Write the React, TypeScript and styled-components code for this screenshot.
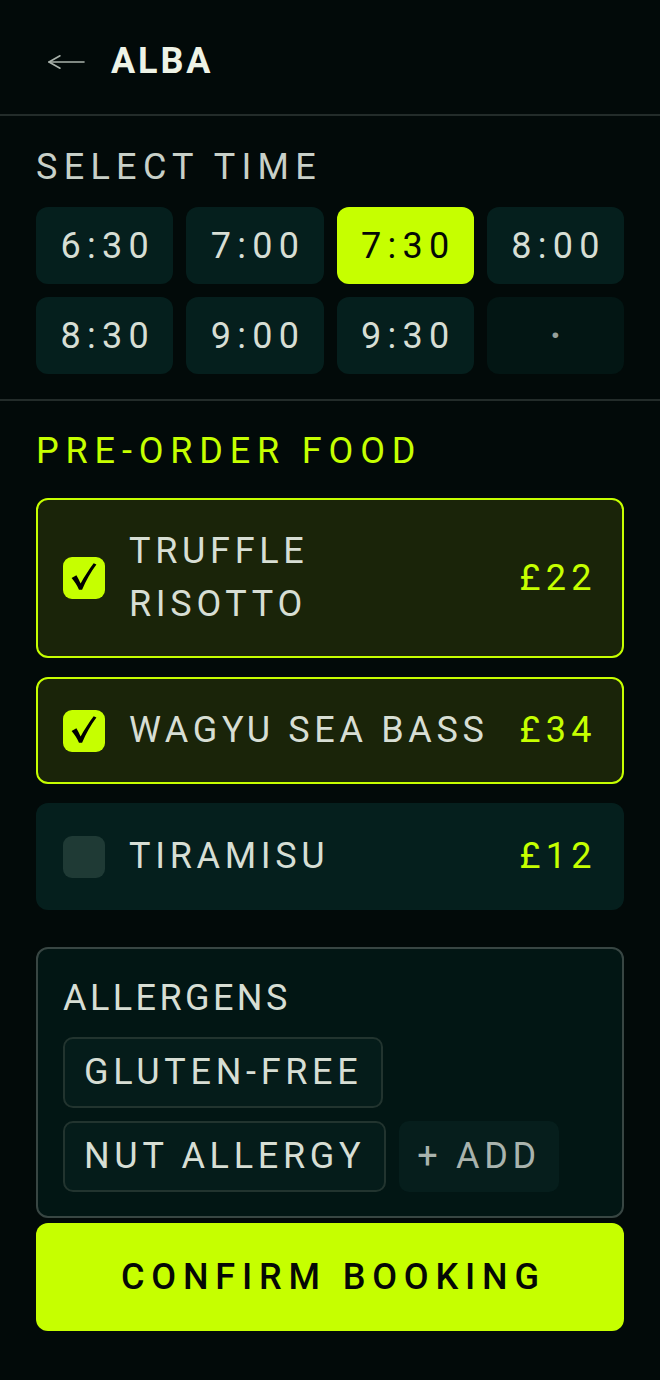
import React from "react";
import styled, { createGlobalStyle } from "styled-components";

const GlobalStyle = createGlobalStyle`
  html, body { margin: 0; padding: 0; background: #020a09; }
  body { font-family: Roboto, "Noto Sans", sans-serif; color: #d7ded4; }
  * { box-sizing: border-box; }
`;

const LIME = "#c6ff00";

const Page = styled.div`
  width: 660px;
  min-height: 1380px;
  background: #020a09;
  display: flex;
  flex-direction: column;
`;

const Header = styled.header`
  height: 116px;
  padding: 10px 36px 0 48px;
  display: flex;
  align-items: center;
  gap: 26px;
  border-bottom: 2px solid #232c2a;
`;

const BackButton = styled.button`
  background: none;
  border: none;
  padding: 0;
  display: flex;
  align-items: center;
  color: #a9b2ab;
  cursor: pointer;
`;

const Title = styled.h1`
  margin: 0;
  font-size: 36px;
  font-weight: 700;
  letter-spacing: 0.08em;
  color: #eef3e6;
  line-height: 1.2;
`;

const Section = styled.section<{ $divider?: boolean }>`
  padding: ${(p) => (p.$divider ? "30px 36px 25px" : "29px 36px 0")};
  border-bottom: ${(p) => (p.$divider ? "2px solid #232c2a" : "none")};
  display: flex;
  flex-direction: column;
`;

const SectionLabel = styled.h2<{ $accent?: boolean; $gap: number }>`
  margin: 0 0 ${(p) => p.$gap}px;
  font-size: 36px;
  font-weight: 400;
  line-height: 1.2;
  letter-spacing: ${(p) => (p.$accent ? "0.19em" : "0.175em")};
  color: ${(p) => (p.$accent ? LIME : "#c8d0c8")};
`;

const TimeGrid = styled.div`
  display: grid;
  grid-template-columns: repeat(4, 1fr);
  gap: 13px;
`;

const Slot = styled.button<{ $selected?: boolean; $empty?: boolean }>`
  height: 77px;
  border: none;
  border-radius: 12px;
  display: flex;
  align-items: center;
  justify-content: center;
  font-family: Roboto, sans-serif;
  font-size: 36px;
  font-weight: ${(p) => (p.$empty ? 700 : 400)};
  letter-spacing: 0.175em;
  padding: 0 0 0 0.175em;
  background: ${(p) => (p.$selected ? LIME : p.$empty ? "#031614" : "#051f1d")};
  color: ${(p) => (p.$selected ? "#050805" : p.$empty ? "#96a09b" : "#d7ded4")};
`;

const FoodList = styled.div`
  display: flex;
  flex-direction: column;
  gap: 19px;
`;

const FoodCard = styled.label<{ $checked?: boolean }>`
  display: flex;
  align-items: center;
  gap: 24px;
  padding: 25px 25px;
  border-radius: 12px;
  border: 2px solid ${(p) => (p.$checked ? LIME : "transparent")};
  background: ${(p) => (p.$checked ? "#1a2409" : "#051f1d")};
`;

const CheckBox = styled.span<{ $checked?: boolean }>`
  flex: 0 0 42px;
  height: 42px;
  border-radius: 9px;
  background: ${(p) => (p.$checked ? LIME : "#1f3a35")};
  color: #000;
  display: flex;
  align-items: center;
  justify-content: center;
`;

const FoodName = styled.span`
  flex: 1;
  font-size: 36px;
  line-height: 53px;
  letter-spacing: 0.13em;
  color: #d7ded4;
`;

const Price = styled.span`
  font-size: 36px;
  line-height: 53px;
  font-weight: 400;
  letter-spacing: 0.15em;
  color: ${LIME};
`;

const AllergenBox = styled.div`
  margin-top: 37px;
  border: 2px solid #384643;
  border-radius: 12px;
  background: #021614;
  padding: 28px 25px 24px;
`;

const AllergenLabel = styled.div`
  font-size: 36px;
  line-height: 1.2;
  letter-spacing: 0.095em;
  color: #d7ded4;
  margin-bottom: 16px;
`;

const ChipRow = styled.div`
  display: flex;
  flex-wrap: wrap;
  gap: 13px;
`;

const Chip = styled.span<{ $add?: boolean }>`
  display: inline-flex;
  align-items: center;
  padding: ${(p) => (p.$add ? "12px 16px" : "12px 19px")};
  border-radius: 10px;
  border: 2px solid ${(p) => (p.$add ? "transparent" : "#22342f")};
  background: ${(p) => (p.$add ? "#061e1c" : "#051c1a")};
  font-size: 36px;
  line-height: 1.2;
  letter-spacing: 0.13em;
  color: ${(p) => (p.$add ? "#a9b3ad" : "#d7ded4")};
`;

const ConfirmButton = styled.button`
  margin-top: 5px;
  height: 108px;
  width: 100%;
  border: none;
  border-radius: 12px;
  background: ${LIME};
  color: #050805;
  font-family: Roboto, sans-serif;
  font-size: 36px;
  font-weight: 500;
  letter-spacing: 0.19em;
  padding: 0 0 0 0.19em;
  cursor: pointer;
`;

const BackArrow = () => (
  <svg width="37" height="16" viewBox="0 0 37 16" fill="none" stroke="currentColor" strokeWidth="1.6" strokeLinecap="round" strokeLinejoin="round">
    <path d="M1 8h35" />
    <path d="M12 1.8 1 8l11 6.2" />
  </svg>
);

const CheckMark = () => (
  <svg width="42" height="42" viewBox="0 0 42 42" fill="currentColor">
    <path d="M8.6 21 13.4 18.3c1.5 2.6 3 5.3 4.2 8.2C21.4 19.6 26 12.6 30.7 6.3l2.7 1.1C27.9 15 22.9 23.4 19.1 32.7h-3.1C14.1 28.5 11.6 24.5 8.6 21Z" />
  </svg>
);

const times = ["6:30", "7:00", "7:30", "8:00", "8:30", "9:00", "9:30"];

const foods = [
  { name: "TRUFFLE RISOTTO", price: "£22", checked: true, wrap: true },
  { name: "WAGYU SEA BASS", price: "£34", checked: true },
  { name: "TIRAMISU", price: "£12", checked: false },
];

export default function App() {
  return (
    <>
      <GlobalStyle />
      <Page>
        <Header>
          <BackButton aria-label="Back">
            <BackArrow />
          </BackButton>
          <Title>ALBA</Title>
        </Header>

        <Section $divider>
          <SectionLabel $gap={18}>SELECT TIME</SectionLabel>
          <TimeGrid>
            {times.map((t) => (
              <Slot key={t} $selected={t === "7:30"}>
                {t}
              </Slot>
            ))}
            <Slot $empty>·</Slot>
          </TimeGrid>
        </Section>

        <Section>
          <SectionLabel $accent $gap={25}>PRE-ORDER FOOD</SectionLabel>
          <FoodList>
            {foods.map((f) => (
              <FoodCard key={f.name} $checked={f.checked}>
                <CheckBox $checked={f.checked}>{f.checked && <CheckMark />}</CheckBox>
                <FoodName>
                  {f.wrap ? (
                    <>
                      TRUFFLE
                      <br />
                      RISOTTO
                    </>
                  ) : (
                    f.name
                  )}
                </FoodName>
                <Price>{f.price}</Price>
              </FoodCard>
            ))}
          </FoodList>

          <AllergenBox>
            <AllergenLabel>ALLERGENS</AllergenLabel>
            <ChipRow>
              <Chip>GLUTEN-FREE</Chip>
              <Chip>NUT ALLERGY</Chip>
              <Chip $add>+ ADD</Chip>
            </ChipRow>
          </AllergenBox>

          <ConfirmButton>CONFIRM BOOKING</ConfirmButton>
        </Section>
      </Page>
    </>
  );
}
